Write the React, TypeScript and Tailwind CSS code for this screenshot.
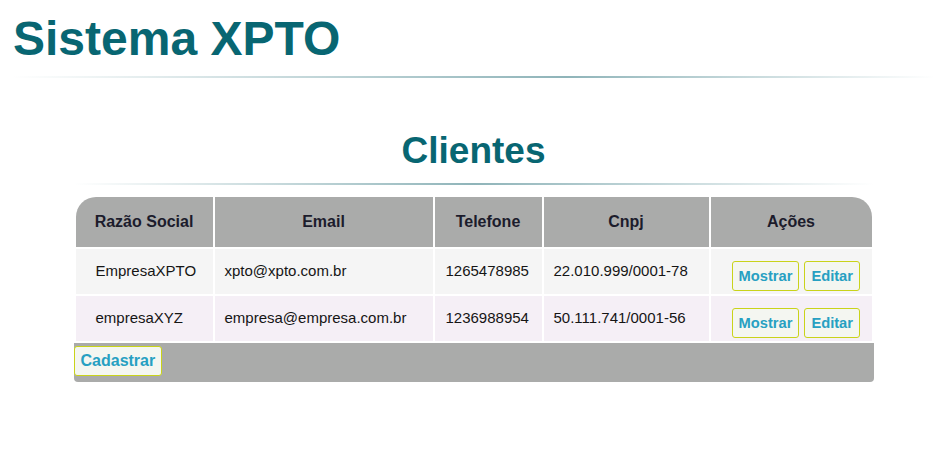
import React from "react";

const rows = [
  { razao: "EmpresaXPTO", email: "xpto@xpto.com.br", tel: "1265478985", cnpj: "22.010.999/0001-78", bg: "bg-[#f5f5f5]" },
  { razao: "empresaXYZ", email: "empresa@empresa.com.br", tel: "1236988954", cnpj: "50.111.741/0001-56", bg: "bg-[#f5eff6]" },
];

function Btn({ children, big }: { children: React.ReactNode; big?: boolean }) {
  return (
    <button
      className={
        "h-[30px] px-[6px] border border-[#c9d31a] rounded-[3px] bg-[#f4f6f1] text-[#27a0c2] font-bold leading-none " +
        (big ? "text-[16px]" : "text-[14.7px]")
      }
    >
      {children}
    </button>
  );
}

export default function App() {
  const th = "bg-[#aaabaa] h-[50px] flex items-center justify-center text-[16px] font-bold text-[#1c1c2c]";
  const td = "h-[45px] flex items-center text-[15px] text-[#151515]";
  return (
    <div className="w-[947px] min-h-[460px] bg-white font-['Liberation_Sans',Arial,sans-serif]">
      <h1 className="pt-[15px] pl-[13px] text-[48px] leading-[48px] font-bold text-[#086672]">Sistema XPTO</h1>
      <div className="mt-[13px] mx-[12px] h-[2px] bg-gradient-to-r from-transparent via-[#8fb4b9] via-60% to-transparent" />
      <h2 className="mt-[54px] text-center text-[37px] leading-[37px] font-bold text-[#086672]">Clientes</h2>
      <div className="mt-[14px] mx-auto w-[800px] h-[2px] bg-gradient-to-r from-transparent via-[#8fb4b9] to-transparent" />
      <div className="mt-[10px] mx-auto w-[800px]">
        <div className="grid grid-cols-[137px_218px_107px_165px_161px] gap-[2px] p-[2px]">
          <div className={th + " rounded-tl-[20px]"}>Razão Social</div>
          <div className={th}>Email</div>
          <div className={th}>Telefone</div>
          <div className={th}>Cnpj</div>
          <div className={th + " rounded-tr-[20px]"}>Ações</div>
          {rows.map((r) => (
            <React.Fragment key={r.razao}>
              <div className={td + " pl-[20px] " + r.bg}>{r.razao}</div>
              <div className={td + " pl-[10px] " + r.bg}>{r.email}</div>
              <div className={td + " pl-[11px] " + r.bg}>{r.tel}</div>
              <div className={td + " pl-[10px] " + r.bg}>{r.cnpj}</div>
              <div className={"h-[45px] flex items-start pt-[12px] pl-[21px] gap-[5px] " + r.bg}>
                <Btn>Mostrar</Btn>
                <Btn>Editar</Btn>
              </div>
            </React.Fragment>
          ))}
        </div>
        <div className="h-[39px] bg-[#aaabaa] rounded-b-[4px] pt-[3px]">
          <Btn big>Cadastrar</Btn>
        </div>
      </div>
    </div>
  );
}
